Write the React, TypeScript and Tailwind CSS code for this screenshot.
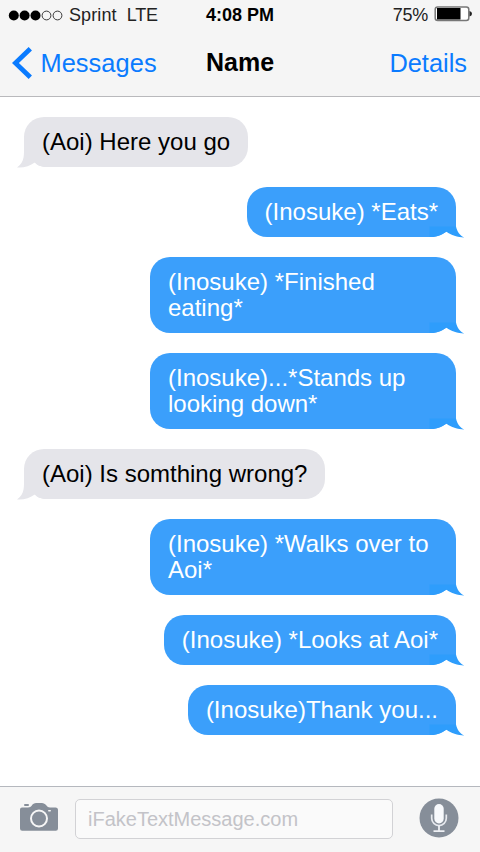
import { clsx } from 'clsx';

interface Message {
	text: string;
	sent: boolean;
}

const messages: Message[] = [
	{ text: '(Aoi) Here you go', sent: false },
	{ text: '(Inosuke) *Eats*', sent: true },
	{ text: '(Inosuke) *Finished eating*', sent: true },
	{ text: '(Inosuke)...*Stands up looking down*', sent: true },
	{ text: '(Aoi) Is somthing wrong?', sent: false },
	{ text: '(Inosuke) *Walks over to Aoi*', sent: true },
	{ text: '(Inosuke) *Looks at Aoi*', sent: true },
	{ text: '(Inosuke)Thank you...', sent: true },
];

const StatusBar = () => (
	<div className="grid grid-cols-3 h-[30px] items-center text-[18px] leading-[30px] text-[#222]">
		<div className="flex items-center pl-[8px] whitespace-nowrap">
			<svg width="55" height="12" viewBox="0 0 55 12">
				<circle cx="5.8" cy="6.5" r="5" fill="#000" />
				<circle cx="16.6" cy="6.5" r="5" fill="#000" />
				<circle cx="27.5" cy="6.5" r="5" fill="#000" />
				<circle cx="38.5" cy="6.5" r="4.4" fill="none" stroke="#222" strokeWidth="0.9" />
				<circle cx="49.5" cy="6.5" r="4.4" fill="none" stroke="#222" strokeWidth="0.9" />
			</svg>
			<span className="ml-[6px] tracking-[0.1px]">Sprint</span>
			<span className="ml-[10px] tracking-[-0.1px]">LTE</span>
		</div>
		<div className="text-center font-bold text-black">4:08 PM</div>
		<div className="flex items-center justify-end pr-[8px]">
			<span className="tracking-[-0.3px]">75%</span>
			<svg className="ml-[6px] -mt-[3px]" width="38" height="16" viewBox="0 0 38 16">
				<rect x="1.2" y="1" width="33.6" height="13.5" rx="2.5" fill="#fff" stroke="#777" strokeWidth="1.5" />
				<rect x="3" y="2" width="23.5" height="11.5" fill="#000" />
				<path d="M35.5 5 Q38 5.5 38 7.8 Q38 10 35.5 10.5 Z" fill="#222" />
			</svg>
		</div>
	</div>
);

const Header = () => (
	<header className="h-[97px] shrink-0 bg-[#f5f5f5] border-b border-[#b9b9bc]">
		<StatusBar />
		<div className="grid grid-cols-3 h-[66px] items-center text-[25.4px] leading-[30px] text-[#0a7bff]">
			<div className="flex items-center pl-[12px]">
				<svg width="20" height="32" viewBox="0 0 20 32">
					<path d="M18.3 1.8 L3.4 16 L18.3 30.2" fill="none" stroke="currentColor" strokeWidth="4.8" />
				</svg>
				<span className="ml-[8.5px] tracking-[0.05px]">Messages</span>
			</div>
			<h1 className="text-center text-[25px] font-bold text-black -mt-[2px]">Name</h1>
			<div className="text-right pr-[13px]">Details</div>
		</div>
	</header>
);

// The white shape trims the bubble's square corner, the blue one is the tail itself
const SentTail = () => (
	<svg className="absolute -right-[9px] -bottom-[1px]" width="36" height="12" viewBox="0 0 36 12">
		<path d="M4 12 V11 Q12 10 17 5.5 L27 4 H36 V12 Z" fill="#fff" />
		<path
			d="M0.5 0.5 H27 C28 5.5 31 9.5 35.3 11.5 C28.5 11.4 22 9.2 17.5 5.8 C13.5 8.2 9.5 10.6 4 11 H0.5 Z"
			fill="#2e9dfc"
		/>
	</svg>
);

const ReceivedTail = () => (
	<svg className="absolute -left-[7px] -bottom-[1px]" width="28" height="24" viewBox="0 0 28 24">
		<path d="M0 14 H8 L18 18.5 Q21 22 27 23 V24 H0 Z" fill="#fff" />
		<path d="M7 0 C7 11 8 18 0 23.5 C7 24 13 22 17.8 18.6 C20 21 23 22.5 28 23 V0 Z" fill="#e5e5ea" />
	</svg>
);

const Bubble = ({ text, sent }: Message) => (
	<div
		className={clsx(
			'relative max-w-[306px] rounded-[20px] px-[18px] py-[12px] text-[24px] leading-[26px]',
			sent
				? 'self-end rounded-br-none bg-[#3b9ffb] text-white'
				: 'self-start rounded-bl-none bg-[#e5e5ea] text-black'
		)}
	>
		{sent ? <SentTail /> : <ReceivedTail />}
		<span className="relative">{text}</span>
	</div>
);

const Camera = () => (
	<svg width="40" height="30" viewBox="0 0 40 30">
		<path
			d="M3 5.5 H9 Q12 5.5 13.5 2.5 Q14.8 1 17 1 H23 Q25 1 26.5 2.5 Q28.5 5.5 31 5.5 H36.5 Q39 5.5 39 8 V26.5 Q39 28.7 36.8 28.7 H3.2 Q1 28.7 1 26.5 V7.5 Q1 5.5 3 5.5 Z"
			fill="#868e99"
		/>
		<rect x="5" y="2" width="5" height="2" rx="1" fill="#868e99" />
		<circle cx="20" cy="16.5" r="8" fill="none" stroke="#f6f6f6" strokeWidth="2" />
		<rect x="29" y="8" width="3" height="1.6" rx="0.8" fill="#f6f6f6" />
	</svg>
);

const Microphone = () => (
	<svg width="40" height="40" viewBox="0 0 40 40">
		<circle cx="20" cy="20" r="19.5" fill="#868e99" />
		<rect x="15.3" y="6" width="9.4" height="19.5" rx="4.7" fill="#f7f9fc" />
		<path d="M12.7 16.5 V20.3 A7.3 7.3 0 0 0 27.3 20.3 V16.5" fill="none" stroke="#e6e9ee" strokeWidth="1.7" />
		<path d="M20 27.5 V33 M14.5 33.2 H25.5" fill="none" stroke="#eef0f4" strokeWidth="1.8" />
	</svg>
);

const InputBar = () => (
	<footer className="flex h-[66px] shrink-0 items-start border-t border-[#b5b8be] bg-[#f6f6f6] pl-[19px] pr-[21px]">
		<div className="pt-[15px]">
			<Camera />
		</div>
		<div className="mt-[12px] ml-[16px] h-[40px] w-[318px] rounded-[5px] border border-[#d2d2d5] bg-[#fafafa] pl-[12px] text-[20px] leading-[38px] text-[#c3c3c8]">
			iFakeTextMessage.com
		</div>
		<div className="ml-auto pt-[11px]">
			<Microphone />
		</div>
	</footer>
);

export default function App() {
	return (
		<div className="flex h-[852px] w-[480px] flex-col overflow-hidden bg-white font-['Liberation_Sans',Arial,sans-serif]">
			<Header />
			<main className="flex flex-1 flex-col gap-[20px] pt-[20px] pl-[24px] pr-[24px]">
				{messages.map((message) => (
					<Bubble key={message.text} {...message} />
				))}
			</main>
			<InputBar />
		</div>
	);
}
